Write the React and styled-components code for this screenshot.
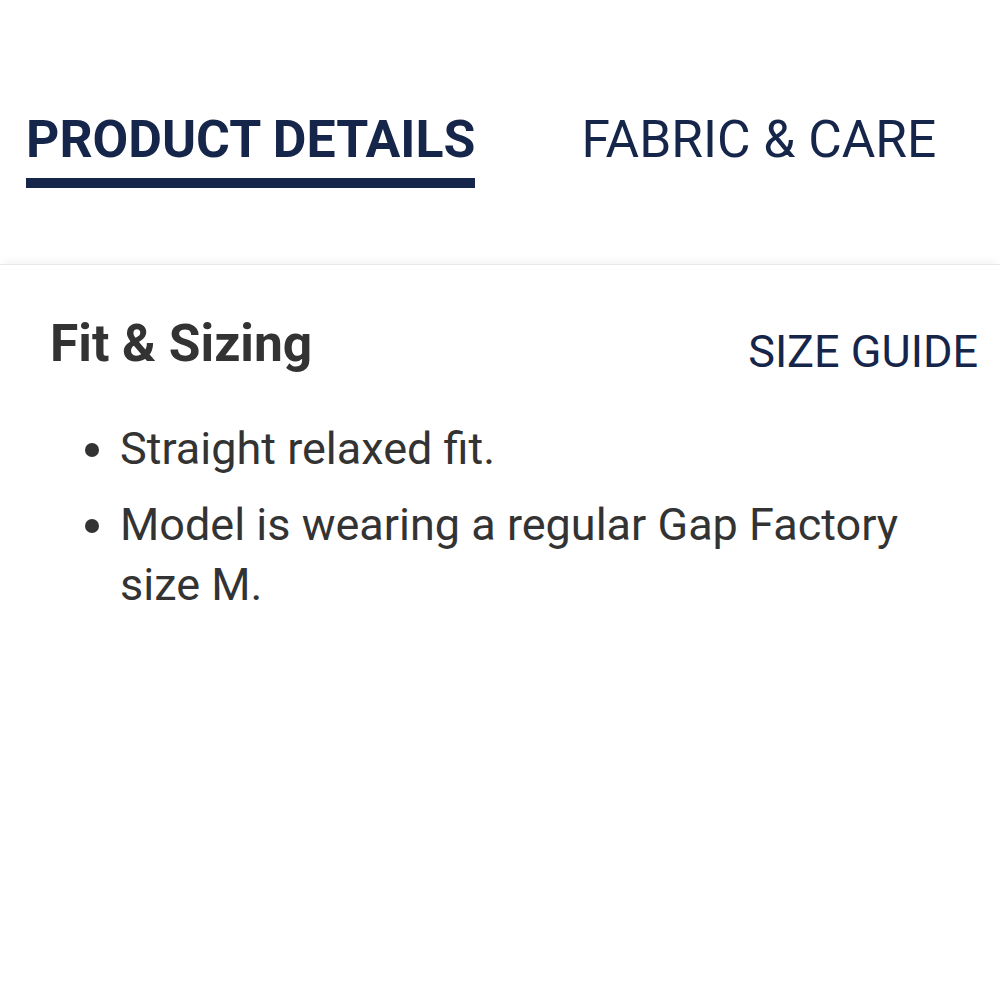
import React, { useState } from "react";
import styled, { createGlobalStyle } from "styled-components";

const GlobalStyle = createGlobalStyle`
  html, body {
    margin: 0;
    padding: 0;
    background: #fff;
  }
  body {
    font-family: Roboto, "Liberation Sans", Arial, sans-serif;
  }
`;

const NAVY = "#16264a";
const TEXT = "#333333";

const tabs = ["PRODUCT DETAILS", "FABRIC & CARE"];

const bullets = [
  "Straight relaxed fit.",
  "Model is wearing a regular Gap Factory size M.",
];

export default function App() {
  const [active, setActive] = useState(0);

  return (
    <>
      <GlobalStyle />
      <Page>
        <TabBar>
          {tabs.map((t, i) => (
            <Tab key={t} active={active === i} onClick={() => setActive(i)}>
              {t}
            </Tab>
          ))}
        </TabBar>
        <Panel>
          <HeadRow>
            <Heading>Fit &amp; Sizing</Heading>
            <GuideLink>SIZE GUIDE</GuideLink>
          </HeadRow>
          <List>
            {bullets.map((b) => (
              <Item key={b}>{b}</Item>
            ))}
          </List>
        </Panel>
      </Page>
    </>
  );
}

const Page = styled.div`
  width: 1000px;
  min-height: 1000px;
  background: #fff;
`;

const TabBar = styled.div`
  display: flex;
  gap: 106px;
  padding: 114px 0 76px 26px;
`;

const Tab = styled.div`
  font-size: ${(p) => (p.active ? "51.8px" : "51.5px")};
  line-height: 52px;
  font-weight: ${(p) => (p.active ? 700 : 400)};
  color: ${NAVY};
  cursor: pointer;
  height: 74px;
  box-sizing: border-box;
  border-bottom: 10px solid ${(p) => (p.active ? NAVY : "transparent")};
  white-space: nowrap;
`;

const Panel = styled.div`
  border-top: 1px solid #e8e8e8;
  box-shadow: 0 -5px 9px -3px rgba(0, 0, 0, 0.06);
  padding: 49px 22px 0 50px;
`;

const HeadRow = styled.div`
  display: flex;
  justify-content: space-between;
  align-items: flex-start;
`;

const Heading = styled.h2`
  margin: 0;
  font-size: 51.5px;
  line-height: 60px;
  font-weight: 700;
  color: ${TEXT};
`;

const GuideLink = styled.a`
  font-size: 45px;
  line-height: 50px;
  color: ${NAVY};
  cursor: pointer;
  margin-top: 13px;
`;

const List = styled.ul`
  margin: 42px 0 0;
  padding: 0 40px 0 70px;
`;

const Item = styled.li`
  font-size: 45px;
  line-height: 60px;
  color: ${TEXT};
  margin-bottom: 16px;
`;
